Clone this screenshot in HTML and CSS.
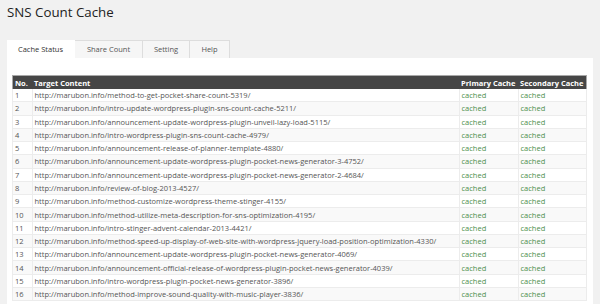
FILE: index.html
```html
<!DOCTYPE html>
<html lang="en">
<head>
    <meta charset="UTF-8">
    <title>SNS Count Cache</title>
    <link rel="stylesheet" href="styles.css">
</head>
<body>
    <div class="wrap">
        <h1>SNS Count Cache</h1>

        <ul class="tabs">
            <li class="tab active">Cache Status</li>
            <li class="tab">Share Count</li>
            <li class="tab">Setting</li>
            <li class="tab">Help</li>
        </ul>

        <div class="panel">
            <table class="cacheTable">
                <thead>
                    <tr>
                        <th class="colNo">No.</th>
                        <th>Target Content</th>
                        <th class="colPrimary">Primary Cache</th>
                        <th class="colSecondary">Secondary Cache</th>
                    </tr>
                </thead>
                <tbody>
                    <tr><td>1</td><td>http://marubon.info/method-to-get-pocket-share-count-5319/</td><td class="cached">cached</td><td class="cached">cached</td></tr>
                    <tr><td>2</td><td>http://marubon.info/intro-update-wordpress-plugin-sns-count-cache-5211/</td><td class="cached">cached</td><td class="cached">cached</td></tr>
                    <tr><td>3</td><td>http://marubon.info/announcement-update-wordpress-plugin-unveil-lazy-load-5115/</td><td class="cached">cached</td><td class="cached">cached</td></tr>
                    <tr><td>4</td><td>http://marubon.info/intro-wordpress-plugin-sns-count-cache-4979/</td><td class="cached">cached</td><td class="cached">cached</td></tr>
                    <tr><td>5</td><td>http://marubon.info/announcement-release-of-planner-template-4880/</td><td class="cached">cached</td><td class="cached">cached</td></tr>
                    <tr><td>6</td><td>http://marubon.info/announcement-update-wordpress-plugin-pocket-news-generator-3-4752/</td><td class="cached">cached</td><td class="cached">cached</td></tr>
                    <tr><td>7</td><td>http://marubon.info/announcement-update-wordpress-plugin-pocket-news-generator-2-4684/</td><td class="cached">cached</td><td class="cached">cached</td></tr>
                    <tr><td>8</td><td>http://marubon.info/review-of-blog-2013-4527/</td><td class="cached">cached</td><td class="cached">cached</td></tr>
                    <tr><td>9</td><td>http://marubon.info/method-customize-wordpress-theme-stinger-4155/</td><td class="cached">cached</td><td class="cached">cached</td></tr>
                    <tr><td>10</td><td>http://marubon.info/method-utilize-meta-description-for-sns-optimization-4195/</td><td class="cached">cached</td><td class="cached">cached</td></tr>
                    <tr><td>11</td><td>http://marubon.info/intro-stinger-advent-calendar-2013-4421/</td><td class="cached">cached</td><td class="cached">cached</td></tr>
                    <tr><td>12</td><td>http://marubon.info/method-speed-up-display-of-web-site-with-wordpress-jquery-load-position-optimization-4330/</td><td class="cached">cached</td><td class="cached">cached</td></tr>
                    <tr><td>13</td><td>http://marubon.info/announcement-update-wordpress-plugin-pocket-news-generator-4069/</td><td class="cached">cached</td><td class="cached">cached</td></tr>
                    <tr><td>14</td><td>http://marubon.info/announcement-official-release-of-wordpress-plugin-pocket-news-generator-4039/</td><td class="cached">cached</td><td class="cached">cached</td></tr>
                    <tr><td>15</td><td>http://marubon.info/intro-wordpress-plugin-pocket-news-generator-3896/</td><td class="cached">cached</td><td class="cached">cached</td></tr>
                    <tr><td>16</td><td>http://marubon.info/method-improve-sound-quality-with-music-player-3836/</td><td class="cached">cached</td><td class="cached">cached</td></tr>
                </tbody>
            </table>
        </div>
    </div>
</body>
</html>
```

FILE: styles.css
```css
body {
    background-color: #f1f1f1;
    color: #444444;
    font-family: "Open Sans", sans-serif;
    margin: 0;
    padding: 0;
}

.wrap {
    padding: 0 7px;
}

h1 {
    font-size: 13.3px;
    font-weight: 400;
    color: #222222;
    margin: 0;
    padding: 2px 0 0 0;
    line-height: 20px;
}

.tabs {
    display: flex;
    list-style: none;
    margin: 18px 0 0 0;
    padding: 0;
}

.tab {
    box-sizing: border-box;
    font-size: 7.5px;
    color: #555555;
    background-color: #f6f6f6;
    border: 1px solid #dddddd;
    border-bottom: none;
    border-left: none;
    height: 18px;
    line-height: 17px;
    text-align: center;
}

.tab:nth-child(1) { width: 68px; }
.tab:nth-child(2) { width: 68px; }
.tab:nth-child(3) { width: 47px; }
.tab:nth-child(4) { width: 40px; }

.tab.active {
    background-color: #ffffff;
    border-color: #ffffff;
    color: #333333;
}

.panel {
    background-color: #ffffff;
    padding: 17px 6px 0 5px;
    height: 230px;
    overflow: hidden;
}

.cacheTable {
    width: 100%;
    border-collapse: collapse;
    border: 1px solid #a8a8a8;
    font-size: 7.5px;
}

.cacheTable th {
    background-color: #464646;
    color: #ffffff;
    font-weight: 700;
    text-align: left;
    height: 13px;
    padding: 0 2px;
    white-space: nowrap;
}

.cacheTable td {
    color: #555555;
    height: 12.27px;
    padding: 0 2px;
    border: 1px solid #ececec;
    border-top: none;
    white-space: nowrap;
}

.cacheTable tbody tr:nth-child(even) td {
    background-color: #f9f9f9;
}

.colNo { width: 15px; }
.colPrimary { width: 55px; }
.colSecondary { width: 64px; }

.cacheTable td.cached {
    color: #4d8f4d;
}
```
